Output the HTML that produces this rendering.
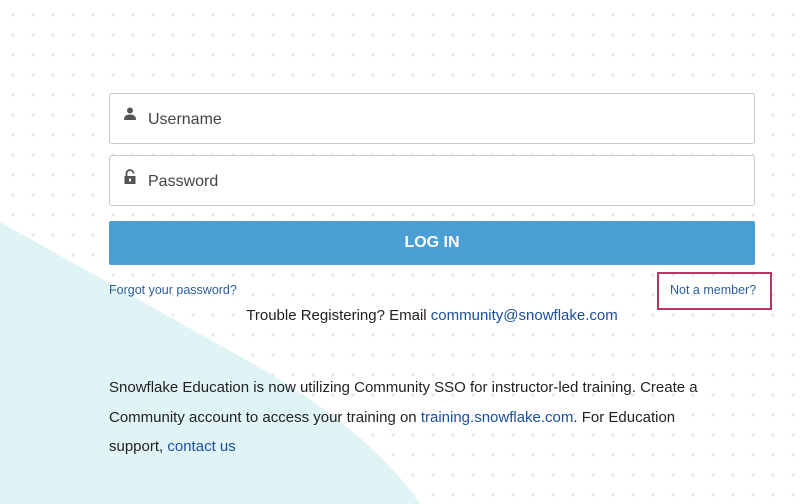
<!DOCTYPE html>
<html><head><meta charset="utf-8"><style>
html,body{margin:0;padding:0}
body{width:800px;height:504px;position:relative;overflow:hidden;background:#fff;font-family:"Liberation Sans",sans-serif;}
.dots{position:absolute;inset:0;background-image:radial-gradient(circle,#e8e8e8 1.5px,transparent 1.8px);background-size:20px 20px;background-position:3px 5px;}
.inp{position:absolute;left:109px;width:644px;height:49px;border:1px solid #c8c8c8;border-radius:3px;background:#fff;}
.inp span{position:absolute;left:38px;top:17px;font-size:16px;color:#444;}
.inp svg{position:absolute;left:13px;top:13px}
.btn{position:absolute;left:109px;top:221px;width:646px;height:44px;background:#4aa0d5;border-radius:2px;color:#fff;font-weight:bold;font-size:16px;text-align:center;line-height:44px;}
a{color:#1a4f9c;text-decoration:none}
.sm{position:absolute;font-size:12.5px;color:#2a5f9c}
.box{position:absolute;left:657px;top:272px;width:111px;height:34px;border:2px solid #b03a63;}
.tr{position:absolute;top:307px;left:0;width:864px;text-align:center;font-size:15px;color:#222}
.p{position:absolute;left:109px;top:373px;width:615px;font-size:15px;line-height:29.5px;color:#222}
</style></head><body>
<div class="dots"></div>
<svg width="800" height="504" style="position:absolute;left:0;top:0"><path d="M0 222 L250 362 Q370 430 420 504 L0 504Z" fill="#e0f3f5"/></svg>
<div class="inp" style="top:93px"><svg width="14" height="14" viewBox="0 0 14 14"><circle cx="7" cy="3.5" r="3" fill="#555"/><path d="M1 13 Q1 7.5 7 7.5 Q13 7.5 13 13Z" fill="#555"/></svg><span>Username</span></div>
<div class="inp" style="top:155px"><svg width="14" height="16" viewBox="0 0 14 16"><path d="M3.5 7 V4.5 A3.5 3.5 0 0 1 10.5 4.5" stroke="#555" stroke-width="1.8" fill="none"/><rect x="1.5" y="7" width="11" height="8" fill="#555"/><rect x="6" y="9.5" width="2" height="3" fill="#fff"/></svg><span>Password</span></div>
<div class="btn">LOG IN</div>
<div class="sm" style="left:109px;top:283px">Forgot your password?</div>
<div class="box"></div>
<div class="sm" style="left:670px;top:283px">Not a member?</div>
<div class="tr">Trouble Registering? Email <a>community@snowflake.com</a></div>
<div class="p">Snowflake Education is now utilizing Community SSO for instructor-led training. Create a Community account to access your training on <a>training.snowflake.com</a>. For Education support, <a>contact us</a></div>
</body></html>
